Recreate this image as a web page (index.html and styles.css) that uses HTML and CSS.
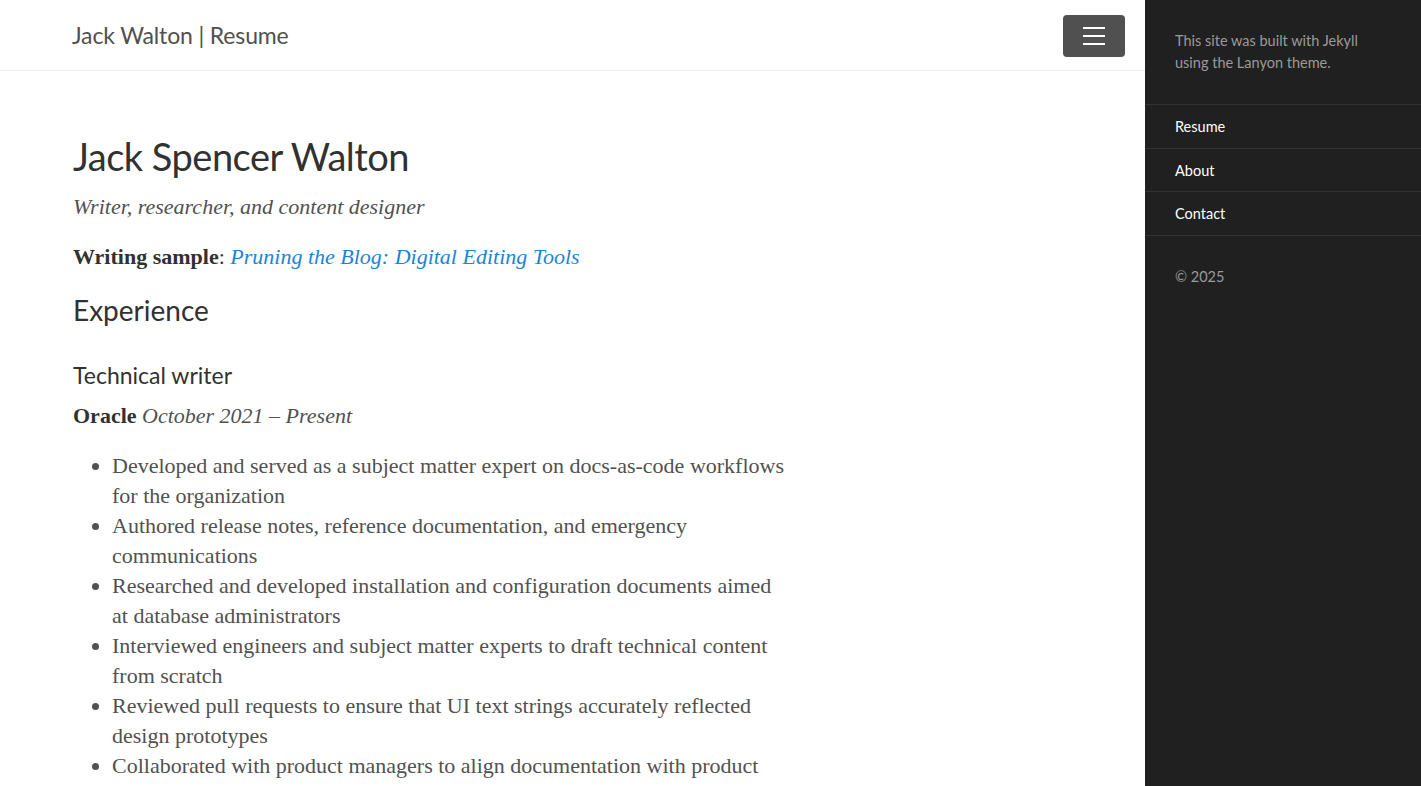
FILE: index.html
```html
<!DOCTYPE html>
<html lang="en">
<head>
<meta charset="utf-8">
<title>Jack Walton | Resume</title>
<link rel="stylesheet" href="styles.css">
</head>
<body>
<div class="wrap">
  <header class="masthead">
    <h3 class="masthead-title"><a href="#">Jack Walton</a> | Resume</h3>
    <button class="toggle" aria-label="Toggle sidebar">
      <svg width="22" height="18" viewBox="0 0 22 18"><rect x="0" y="0" width="22" height="2" fill="#fff"/><rect x="0" y="8" width="22" height="2" fill="#fff"/><rect x="0" y="16" width="22" height="2" fill="#fff"/></svg>
    </button>
  </header>
  <main class="container">
    <h1 class="name">Jack Spencer Walton</h1>
    <p class="tagline"><em>Writer, researcher, and content designer</em></p>
    <p class="sample"><strong>Writing sample</strong>: <a href="#"><em>Pruning the Blog: Digital Editing Tools</em></a></p>
    <h2 class="section">Experience</h2>
    <h3 class="role">Technical writer</h3>
    <p class="org"><strong>Oracle</strong> <em>October 2021 – Present</em></p>
    <ul class="duties">
      <li>Developed and served as a subject matter expert on docs-as-code workflows for the organization</li>
      <li>Authored release notes, reference documentation, and emergency communications</li>
      <li>Researched and developed installation and configuration documents aimed at database administrators</li>
      <li>Interviewed engineers and subject matter experts to draft technical content from scratch</li>
      <li>Reviewed pull requests to ensure that UI text strings accurately reflected design prototypes</li>
      <li>Collaborated with product managers to align documentation with product roadmaps</li>
    </ul>
  </main>
</div>
<aside class="sidebar">
  <div class="sidebar-item intro">
    <p>This site was built with Jekyll using the Lanyon theme.</p>
  </div>
  <nav class="sidebar-nav">
    <a class="nav-item" href="#">Resume</a>
    <a class="nav-item" href="#">About</a>
    <a class="nav-item" href="#">Contact</a>
  </nav>
  <div class="sidebar-item footer">
    <p>© 2025</p>
  </div>
</aside>
</body>
</html>
```
FILE: styles.css
```css
html, body {
  margin: 0;
  padding: 0;
  height: 100%;
  overflow: hidden;
}
body {
  display: flex;
  background: #fff;
  font-family: "Liberation Serif", serif;
  color: #515151;
}
.wrap {
  flex: 1;
  min-width: 0;
}
.masthead {
  height: 71px;
  box-sizing: border-box;
  border-bottom: 1px solid #eee;
  display: flex;
  align-items: center;
  justify-content: space-between;
  padding: 0 20px 0 72px;
}
.masthead-title {
  margin: 0;
  font-family: "Lato", sans-serif;
  font-weight: 400;
  font-size: 23px;
  letter-spacing: -0.15px;
  color: #505050;
}
.masthead-title a {
  color: #505050;
  text-decoration: none;
}
.toggle {
  width: 62px;
  height: 42px;
  margin-top: 1px;
  border: 0;
  border-radius: 4px;
  background: #505050;
  display: flex;
  align-items: center;
  justify-content: center;
  padding: 0;
}
.container {
  padding: 61px 0 0 73px;
  width: 716px;
  font-size: 22px;
  line-height: 30px;
}
.name {
  margin: 0;
  font-family: "Lato", sans-serif;
  font-weight: 400;
  font-size: 38px;
  letter-spacing: -0.5px;
  line-height: 48px;
  color: #313131;
}
.tagline, .sample, .org {
  margin: 0;
}
.tagline {
  margin-top: 12px;
}
.sample {
  margin-top: 20px;
  color: #313131;
}
.sample a {
  color: #1a84d6;
  text-decoration: none;
}
.sample strong, .org strong {
  color: #313131;
}
.section {
  margin: 20px 0 0;
  font-family: "Lato", sans-serif;
  font-weight: 400;
  font-size: 28px;
  line-height: 36px;
  color: #313131;
}
.role {
  margin: 32px 0 0;
  font-family: "Lato", sans-serif;
  font-weight: 400;
  font-size: 23px;
  line-height: 30px;
  color: #313131;
}
.org {
  margin-top: 11px;
}
.duties {
  margin: 20px 0 0;
  padding-left: 39px;
}
.sidebar {
  width: 276px;
  flex: none;
  background: #202020;
  color: #9a9a9a;
  font-family: "Lato", sans-serif;
  font-size: 14.5px;
  line-height: 22px;
}
.sidebar-item {
  padding: 30px;
}
.sidebar-item p {
  margin: 0;
}
.intro {
  padding-right: 46px;
}
.sidebar-nav {
  border-bottom: 1px solid #333;
}
.nav-item {
  display: block;
  padding: 11px 30px 9.5px;
  border-top: 1px solid #333;
  color: #fff;
  text-decoration: none;
}
.footer {
  padding-top: 30px;
}
```
